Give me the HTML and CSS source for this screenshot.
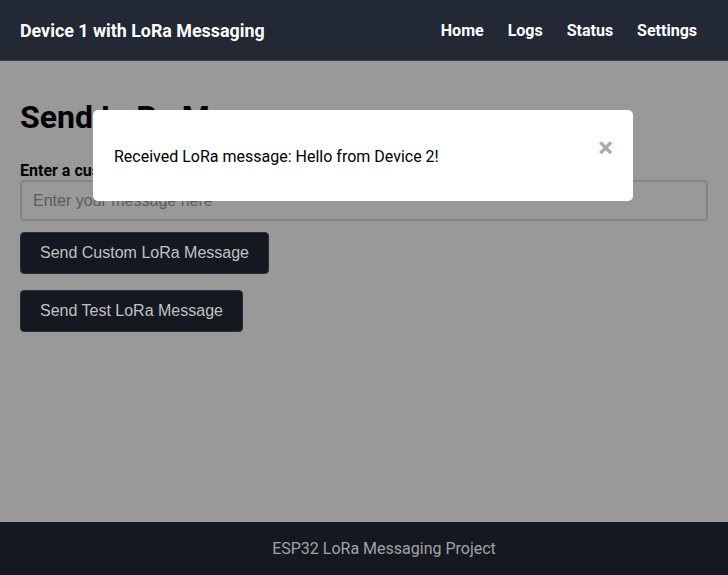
FILE: index.html
```html
<!DOCTYPE html>
<html lang="en">
<head>
<meta charset="utf-8">
<title>Device 1 with LoRa Messaging</title>
<link rel="stylesheet" href="styles.css">
</head>
<body>
<header class="topbar">
  <div class="brand">Device 1 with LoRa Messaging</div>
  <nav class="nav">
    <a href="#">Home</a>
    <a href="#">Logs</a>
    <a href="#">Status</a>
    <a href="#">Settings</a>
  </nav>
</header>
<main class="content">
  <h1 class="title">Send LoRa Message</h1>
  <label class="label" for="msg">Enter a custom message:</label>
  <input class="input" id="msg" type="text" placeholder="Enter your message here">
  <div class="actions">
    <button class="btn">Send Custom LoRa Message</button>
    <button class="btn">Send Test LoRa Message</button>
  </div>
</main>
<footer class="footer">ESP32 LoRa Messaging Project</footer>
<div class="modal">
  <span class="close">&times;</span>
  <p class="modal-text">Received LoRa message: Hello from Device 2!</p>
</div>
</body>
</html>
```

FILE: styles.css
```css
* { box-sizing: border-box; }
html, body { margin: 0; padding: 0; }
body {
  font-family: Roboto, "Liberation Sans", sans-serif;
  background: #999999;
  color: #000;
  min-height: 100vh;
  display: flex;
  flex-direction: column;
}
.topbar {
  height: 61px;
  background: #222834;
  border-bottom: 1px solid #3a404b;
  display: flex;
  align-items: center;
  justify-content: space-between;
  padding: 0 31px 0 20px;
}
.brand {
  color: #fff;
  font-weight: 700;
  font-size: 17.85px;
}
.nav { display: flex; gap: 24px; }
.nav a {
  color: #fff;
  text-decoration: none;
  font-weight: 700;
  font-size: 16px;
}
.content {
  flex: 1;
  padding: 20px;
  display: flex;
  flex-direction: column;
  align-items: flex-start;
}
.title {
  font-size: 32px;
  font-weight: 700;
  margin: 17px 0 25px;
}
.label {
  font-weight: 700;
  font-size: 16px;
  margin-bottom: 0;
}
.input {
  width: 100%;
  height: 41px;
  margin-top: 0;
  border: 2px solid #858585;
  border-radius: 4px;
  background: #999999;
  padding: 0 11px;
  font-family: "Liberation Sans", Arial, sans-serif;
  font-size: 16px;
}
.input::placeholder { color: #5c5c5c; }
.actions {
  display: flex;
  flex-direction: column;
  align-items: flex-start;
  gap: 16px;
  margin-top: 11px;
}
.btn {
  background: #141820;
  color: #c2c2c2;
  border: 1px solid #2a2f38;
  border-radius: 4px;
  height: 42px;
  padding: 0 19px;
  font-family: "Liberation Sans", Arial, sans-serif;
  font-size: 16px;
}
.footer {
  height: 53px;
  background: #141820;
  color: #a3a3a3;
  display: flex;
  align-items: center;
  justify-content: center;
  padding-left: 40px;
  font-size: 16px;
}
.modal {
  position: absolute;
  top: 110px;
  left: 93px;
  width: 540px;
  height: 91px;
  background: #fff;
  border-radius: 5px;
  padding: 0 20px 0 21px;
}
.modal-text {
  margin: 37px 0 0;
  font-size: 16px;
}
.close {
  float: right;
  color: #aaa;
  font-size: 28px;
  font-weight: 700;
  margin-top: 24px;
  margin-right: 0;
  line-height: 1;
}
```
